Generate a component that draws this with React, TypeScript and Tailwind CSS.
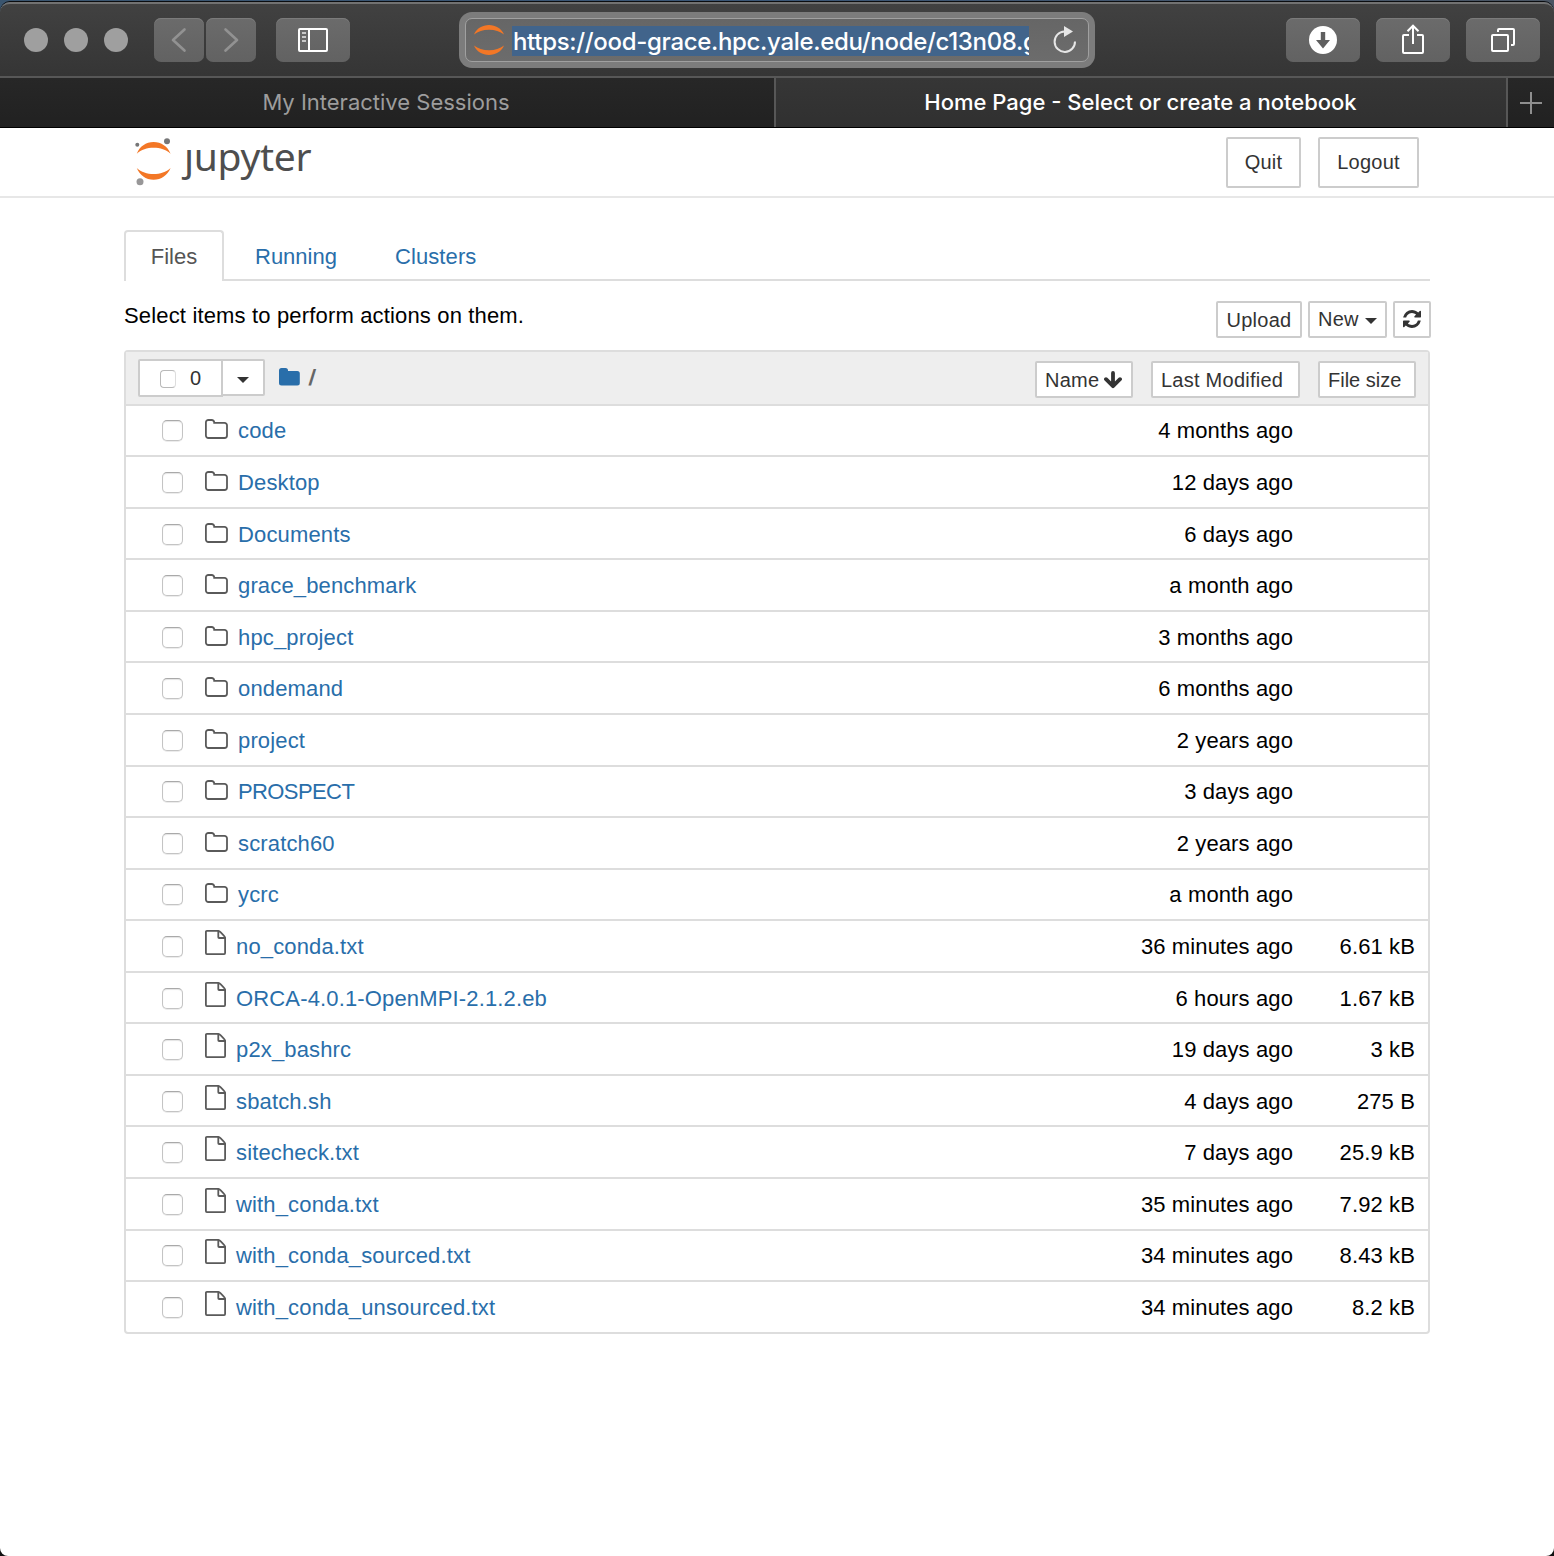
import type { ReactNode } from "react";

type Entry = { name: string; kind: "folder" | "file"; modified: string; size?: string };

const entries: Entry[] = [
  { name: "code", kind: "folder", modified: "4 months ago" },
  { name: "Desktop", kind: "folder", modified: "12 days ago" },
  { name: "Documents", kind: "folder", modified: "6 days ago" },
  { name: "grace_benchmark", kind: "folder", modified: "a month ago" },
  { name: "hpc_project", kind: "folder", modified: "3 months ago" },
  { name: "ondemand", kind: "folder", modified: "6 months ago" },
  { name: "project", kind: "folder", modified: "2 years ago" },
  { name: "PROSPECT", kind: "folder", modified: "3 days ago" },
  { name: "scratch60", kind: "folder", modified: "2 years ago" },
  { name: "ycrc", kind: "folder", modified: "a month ago" },
  { name: "no_conda.txt", kind: "file", modified: "36 minutes ago", size: "6.61 kB" },
  { name: "ORCA-4.0.1-OpenMPI-2.1.2.eb", kind: "file", modified: "6 hours ago", size: "1.67 kB" },
  { name: "p2x_bashrc", kind: "file", modified: "19 days ago", size: "3 kB" },
  { name: "sbatch.sh", kind: "file", modified: "4 days ago", size: "275 B" },
  { name: "sitecheck.txt", kind: "file", modified: "7 days ago", size: "25.9 kB" },
  { name: "with_conda.txt", kind: "file", modified: "35 minutes ago", size: "7.92 kB" },
  { name: "with_conda_sourced.txt", kind: "file", modified: "34 minutes ago", size: "8.43 kB" },
  { name: "with_conda_unsourced.txt", kind: "file", modified: "34 minutes ago", size: "8.2 kB" },
];

function ToolbarButton({ className, children }: { className: string; children: ReactNode }) {
  return (
    <button
      className={`flex h-11 shrink-0 items-center justify-center rounded-[7px] bg-linear-to-b from-[#6b6b6b] to-[#626262] shadow-[inset_0_1px_0_#7b7b7b] ${className}`}
    >
      {children}
    </button>
  );
}

function TitleBar() {
  return (
    <div className="h-[78px] bg-linear-to-r from-[#3a556f] via-[#3a5676] to-[#4a5563]">
      <div className="h-full pt-0.5">
        <div className="flex h-[76px] items-start rounded-t-[10px] border-t-2 border-b-2 border-t-[#727272] border-b-[#575757] bg-linear-to-b from-[#414141] to-[#353535] pt-3.5 shadow-[0_-1px_0_0_#0b0d10]">
          <div className="ml-6 flex h-11 items-center gap-4">
            <span className="size-6 rounded-full bg-[#9f9f9f]" />
            <span className="size-6 rounded-full bg-[#9f9f9f]" />
            <span className="size-6 rounded-full bg-[#9f9f9f]" />
          </div>
          <div className="ml-[26px] flex gap-0.5">
            <ToolbarButton className="w-[50px]">
              <svg width="50" height="44" viewBox="0 0 50 44" fill="none" stroke="#929292" strokeWidth="2.6" strokeLinecap="round" strokeLinejoin="round">
                <path d="M30.500 11.500 19 22l11.500 10.500" />
              </svg>
            </ToolbarButton>
            <ToolbarButton className="w-[50px]">
              <svg width="50" height="44" viewBox="0 0 50 44" fill="none" stroke="#929292" strokeWidth="2.6" strokeLinecap="round" strokeLinejoin="round">
                <path d="M19.500 11.500 31 22 19.500 32.500" />
              </svg>
            </ToolbarButton>
          </div>
          <ToolbarButton className="ml-5 w-[74px]">
            <svg width="30" height="24" viewBox="0 0 30 24" fill="none" stroke="#fff" strokeWidth="2">
              <rect x="1" y="1" width="28" height="22" rx="1" />
              <path d="M11 1v22" />
              <path d="M4 5h4M4 9h4M4 13h4" stroke="#c8c8c8" />
            </svg>
          </ToolbarButton>
          <div className="-mt-1.5 ml-[109px] h-14 w-[636px] rounded-[13px] bg-[#7c7c7c] p-1.5">
            <div className="flex h-11 items-center rounded-[7px] border border-[#a0a0a0] bg-linear-to-b from-[#666] to-[#6c6c6c]">
              <svg className="ml-2 shrink-0" width="30" height="30" viewBox="0 0 30 30" fill="#f37726">
                <path d="M0 9.500C2.500 3.500 8.500 0 15 0s12.500 3.500 15 9.500C26 6.500 21 4.800 15 4.800S4 6.500 0 9.500z" />
                <path d="M0 20.500C2.500 26.500 8.500 30 15 30s12.500-3.500 15-9.500c-4 3-9 4.700-15 4.700S4 23.500 0 20.500z" />
              </svg>
              <div className="mt-0.5 ml-2 h-[30px] w-[517px] overflow-hidden bg-[#41648b] pl-px font-['Inter',sans-serif] text-[24px] leading-[32px] font-medium tracking-[-0.320px] whitespace-nowrap text-white">
                https://ood-grace.hpc.yale.edu/node/c13n08.g
              </div>
              <svg className="ml-[24px] shrink-0" width="24" height="28" viewBox="0 0 24 28">
                <path d="M11.500 5.500A10.200 10.200 0 1 0 22 15.500" fill="none" stroke="#e6e6e6" strokeWidth="2" />
                <path d="M11 0v11l9-5.500z" fill="#e6e6e6" />
              </svg>
            </div>
          </div>
          <div className="ml-auto flex gap-4 pr-3.5">
            <ToolbarButton className="w-[74px]">
              <svg width="28" height="28" viewBox="0 0 28 28">
                <circle cx="14" cy="14" r="14" fill="#fff" />
                <path d="M11.800 6h4.400v8h4.800l-7 8.500-7-8.500h4.800z" fill="#5f5f5f" />
              </svg>
            </ToolbarButton>
            <ToolbarButton className="w-[74px]">
              <svg width="22" height="44" viewBox="0 0 22 44" fill="none" stroke="#fff" strokeWidth="2">
                <path d="M7 17H2a1 1 0 0 0-1 1v16a1 1 0 0 0 1 1h18a1 1 0 0 0 1-1V18a1 1 0 0 0-1-1h-5" />
                <path d="M11 26V7.500M5.500 13.300 11 7.700l5.500 5.600" />
              </svg>
            </ToolbarButton>
            <ToolbarButton className="w-[74px]">
              <svg width="24" height="24" viewBox="0 0 24 24" fill="none" stroke="#fff" strokeWidth="2">
                <rect x="1" y="7" width="16" height="16" rx="1" />
                <path d="M7 4V2a1 1 0 0 1 1-1h14a1 1 0 0 1 1 1v14a1 1 0 0 1-1 1h-2" />
              </svg>
            </ToolbarButton>
          </div>
        </div>
      </div>
    </div>
  );
}

function TabBar() {
  return (
    <div className="flex h-[50px] border-b border-black bg-linear-to-b from-[#272727] to-[#212121] font-['Inter',sans-serif] text-[22px]">
      <div className="flex w-[774px] items-center justify-center pr-0.5 pb-0.5 text-[#9d9d9d]">My Interactive Sessions</div>
      <div className="flex w-[734px] items-center justify-center border-x-2 border-[#575757] bg-linear-to-b from-[#363636] to-[#303030] pr-px pb-0.5 font-medium text-white">
        Home Page - Select or create a notebook
      </div>
      <div className="flex flex-1 items-center justify-center pt-px">
        <svg width="22" height="22" viewBox="0 0 22 22" stroke="#8f8f8f" strokeWidth="2">
          <path d="M11 0v22M0 11h22" />
        </svg>
      </div>
    </div>
  );
}

function JupyterLogo() {
  return (
    <div className="flex h-[68px] items-start pl-[134px]">
      <svg className="mt-2.5 shrink-0" width="40" height="50" viewBox="134 138 40 50">
        <path d="M136.800 153.700C139.500 146.500 146 142 153.600 142s14.200 4.500 17 11.700c-4.500-4.200-10.500-6-17-6s-12.300 1.800-16.800 6z" fill="#f37726" />
        <path d="M136.800 168c2.700 7.200 9.200 11.700 16.800 11.700s14.200-4.500 17-11.700c-4.500 4.200-10.500 6-17 6s-12.300-1.800-16.800-6z" fill="#f37726" />
        <circle cx="137.300" cy="144.800" r="2" fill="#767677" />
        <circle cx="167" cy="141.200" r="3" fill="#767677" />
        <circle cx="140" cy="181.700" r="3.500" fill="#989798" />
      </svg>
      <div className="ml-2.5 flex pt-px font-['Noto_Sans',sans-serif] text-[39px] leading-[54px] tracking-[-0.300px] text-[#4e4e4e]">
        <span className="-ml-3 pl-3 [clip-path:inset(18px_0_0_0)]">j</span>
        <span>upyter</span>
      </div>
    </div>
  );
}

function Button({ className, children }: { className: string; children: ReactNode }) {
  return (
    <button
      className={`flex shrink-0 items-center rounded-[2px] border-2 border-[#ccc] bg-white text-[20px] leading-none tracking-[0.250px] whitespace-nowrap text-[#333] ${className}`}
    >
      {children}
    </button>
  );
}

function Caret({ className }: { className: string }) {
  return (
    <svg className={className} width="12" height="6" viewBox="0 0 12 6" fill="#333">
      <path d="M0 0h12L6 6z" />
    </svg>
  );
}

function RefreshIcon() {
  return (
    <svg width="18" height="18" viewBox="0 0 1536 1536" fill="#333">
      <path d="M1511 928q0 5-1 7-64 268-268 434.500T764 1536q-146 0-282.500-55T238 1324l-129 129q-19 19-45 19t-45-19-19-45V960q0-26 19-45t45-19h448q26 0 45 19t19 45-19 45l-137 137q71 66 161 102t187 36q134 0 250-65t186-179q11-17 53-117 8-23 30-23h192q13 0 22.500 9.500T1511 928zm25-800v448q0 26-19 45t-45 19h-448q-26 0-45-19t-19-45 19-45l138-138Q969 256 768 256q-134 0-250 65T332 500q-11 17-53 117-8 23-30 23H50q-13 0-22.500-9.500T18 608v-7q65-268 270-434.500T768 0q146 0 284 55.500T1297 212l130-129q19-19 45-19t45 19 19 45z" />
    </svg>
  );
}

function Checkbox() {
  return (
    <span className="-mt-px size-[21px] shrink-0 rounded-[5px] border-[1.5px] border-[#c4c4c4] border-t-[#a9a9a9] bg-white shadow-[inset_0_1px_1px_#e4e4e4,0_1px_0_#ececec]" />
  );
}

function FolderIcon() {
  return (
    <svg className="shrink-0" width="23" height="20" viewBox="0 0 23 20" fill="none" stroke="#5a5a5a" strokeWidth="1.800">
      <path d="M.9 3.500A2.500 2.500 0 0 1 3.400 1h3.300a2.500 2.500 0 0 1 2.500 2.500v.3h10.300A2.500 2.500 0 0 1 22 6.300v10.200a2.500 2.500 0 0 1-2.500 2.500H3.400a2.500 2.500 0 0 1-2.500-2.500z" />
    </svg>
  );
}

function FileIcon() {
  return (
    <svg className="shrink-0" width="21" height="25" viewBox="0 0 21 25" fill="none" stroke="#5a5a5a" strokeWidth="1.800" strokeLinejoin="round">
      <path d="M1.900.9h11.600c1 0 6.600 5.500 6.600 6.700v15.500a1 1 0 0 1-1 1H1.900a1 1 0 0 1-1-1V1.900a1 1 0 0 1 1-1z" />
      <path d="M13.300 1v6.200a.8.800 0 0 0 .8.800h6" />
    </svg>
  );
}

function Row({ entry }: { entry: Entry }) {
  const folder = entry.kind === "folder";
  const allCaps = entry.name === entry.name.toUpperCase();
  return (
    <div className="flex h-[51.570px] items-center border-b-2 border-[#ddd] pt-0.5 pr-[13px] pl-9 last:border-transparent">
      <Checkbox />
      <div className={folder ? "-mt-1 ml-[22px] flex" : "-mt-[9px] ml-[22px] flex"}>{folder ? <FolderIcon /> : <FileIcon />}</div>
      <a className={`ml-2.5 text-[#296eaa] ${allCaps ? "tracking-[-0.600px]" : "tracking-[0.150px]"}`}>{entry.name}</a>
      <span className="ml-auto tracking-[0.120px]">{entry.modified}</span>
      <span className="w-[122px] text-right tracking-[0.120px]">{entry.size}</span>
    </div>
  );
}

function FileTable() {
  return (
    <div className="mt-3 h-[984px] rounded-[4px] border-2 border-[#ddd]">
      <div className="flex h-[53.600px] items-start border-b-2 border-[#ddd] bg-[#eee]">
        <div className="mt-[7px] ml-3 flex items-start">
          <div className="flex h-[38px] w-[85px] items-center rounded-l-[2px] border-2 border-[#ccc] bg-white pl-5">
            <span className="mt-0.5 h-[18px] w-4 rounded-[4px] border-[1.5px] border-r border-[#b9b9b9] border-r-[#ddd] bg-white" />
            <span className="ml-3.5 text-[20px] leading-none text-[#333]">0</span>
          </div>
          <div className="-ml-0.5 flex h-[37px] w-11 items-center justify-center rounded-r-[2px] border-2 border-[#ccc] bg-white">
            <Caret className="mt-1" />
          </div>
        </div>
        <svg className="mt-4 ml-3.5" width="21" height="18" viewBox="0 0 21 18" fill="#296eaa">
          <path d="M0 2.500A2.500 2.500 0 0 1 2.500 0h4A2.500 2.500 0 0 1 9 2.500V3h9.300a2.500 2.500 0 0 1 2.500 2.500V15a2.500 2.500 0 0 1-2.500 2.500H2.500A2.500 2.500 0 0 1 0 15z" />
        </svg>
        <span className="mt-[13px] ml-[9px] skew-x-[-7deg] text-[22px] leading-[26px] font-bold text-[#666]">/</span>
        <div className="mt-[9px] mr-3 ml-auto flex gap-[18px]">
          <Button className="h-[37px] w-[98px] pl-2">
            Name
            <svg className="ml-[5px]" width="18" height="18" viewBox="0 0 18 18" fill="none" stroke="#333" strokeWidth="3.800" strokeLinecap="round" strokeLinejoin="round">
              <path d="M9 2v12M2 8.200l7 7 7-7" />
            </svg>
          </Button>
          <Button className="h-[37px] w-[149px] pl-2">Last Modified</Button>
          <Button className="h-[37px] w-[98px] pl-2 tracking-[0px]!">File size</Button>
        </div>
      </div>
      {entries.map((entry) => (
        <Row key={entry.name} entry={entry} />
      ))}
    </div>
  );
}

export default function App() {
  return (
    <div className="h-[1556px] w-[1554px] overflow-hidden bg-[#111]">
      <div className="flex h-full flex-col overflow-hidden rounded-b-[8px] bg-white font-['Liberation_Sans',Arial,sans-serif] text-[22px] leading-[30px] text-black">
        <TitleBar />
        <TabBar />
        <header className="flex h-[70px] items-start border-b-2 border-[#e7e7e7] pr-[135px]">
          <JupyterLogo />
          <div className="mt-[9px] ml-auto flex gap-[17px]">
            <Button className="h-[51px] w-[75px] justify-center pb-0.5">Quit</Button>
            <Button className="h-[51px] w-[101px] justify-center pb-0.5">Logout</Button>
          </div>
        </header>
        <main className="mx-[124px] mt-8">
          <nav className="flex h-[51px] text-[#296eaa]">
            <a className="flex w-[100px] items-center justify-center rounded-t-[4px] border-2 border-b-0 border-[#ddd] text-[#555]">Files</a>
            <div className="-ml-0.5 flex flex-1 items-center border-b-2 border-[#ddd] pt-1">
              <a className="ml-[33px]">Running</a>
              <a className="ml-[58px] tracking-[0.100px]">Clusters</a>
            </div>
          </nav>
          <div className="-mr-px flex h-[57px] items-start">
            <p className="mt-5 tracking-[0.160px]">Select items to perform actions on them.</p>
            <div className="mt-5 ml-auto flex gap-1.5">
              <Button className="h-[37px] w-[86px] justify-center">Upload</Button>
              <Button className="h-[37px] w-[79px] pb-0.5 pl-2">
                New
                <Caret className="mt-1 ml-1.5" />
              </Button>
              <Button className="h-[37px] w-[38px] justify-center pb-0.5">
                <RefreshIcon />
              </Button>
            </div>
          </div>
          <FileTable />
        </main>
      </div>
    </div>
  );
}
